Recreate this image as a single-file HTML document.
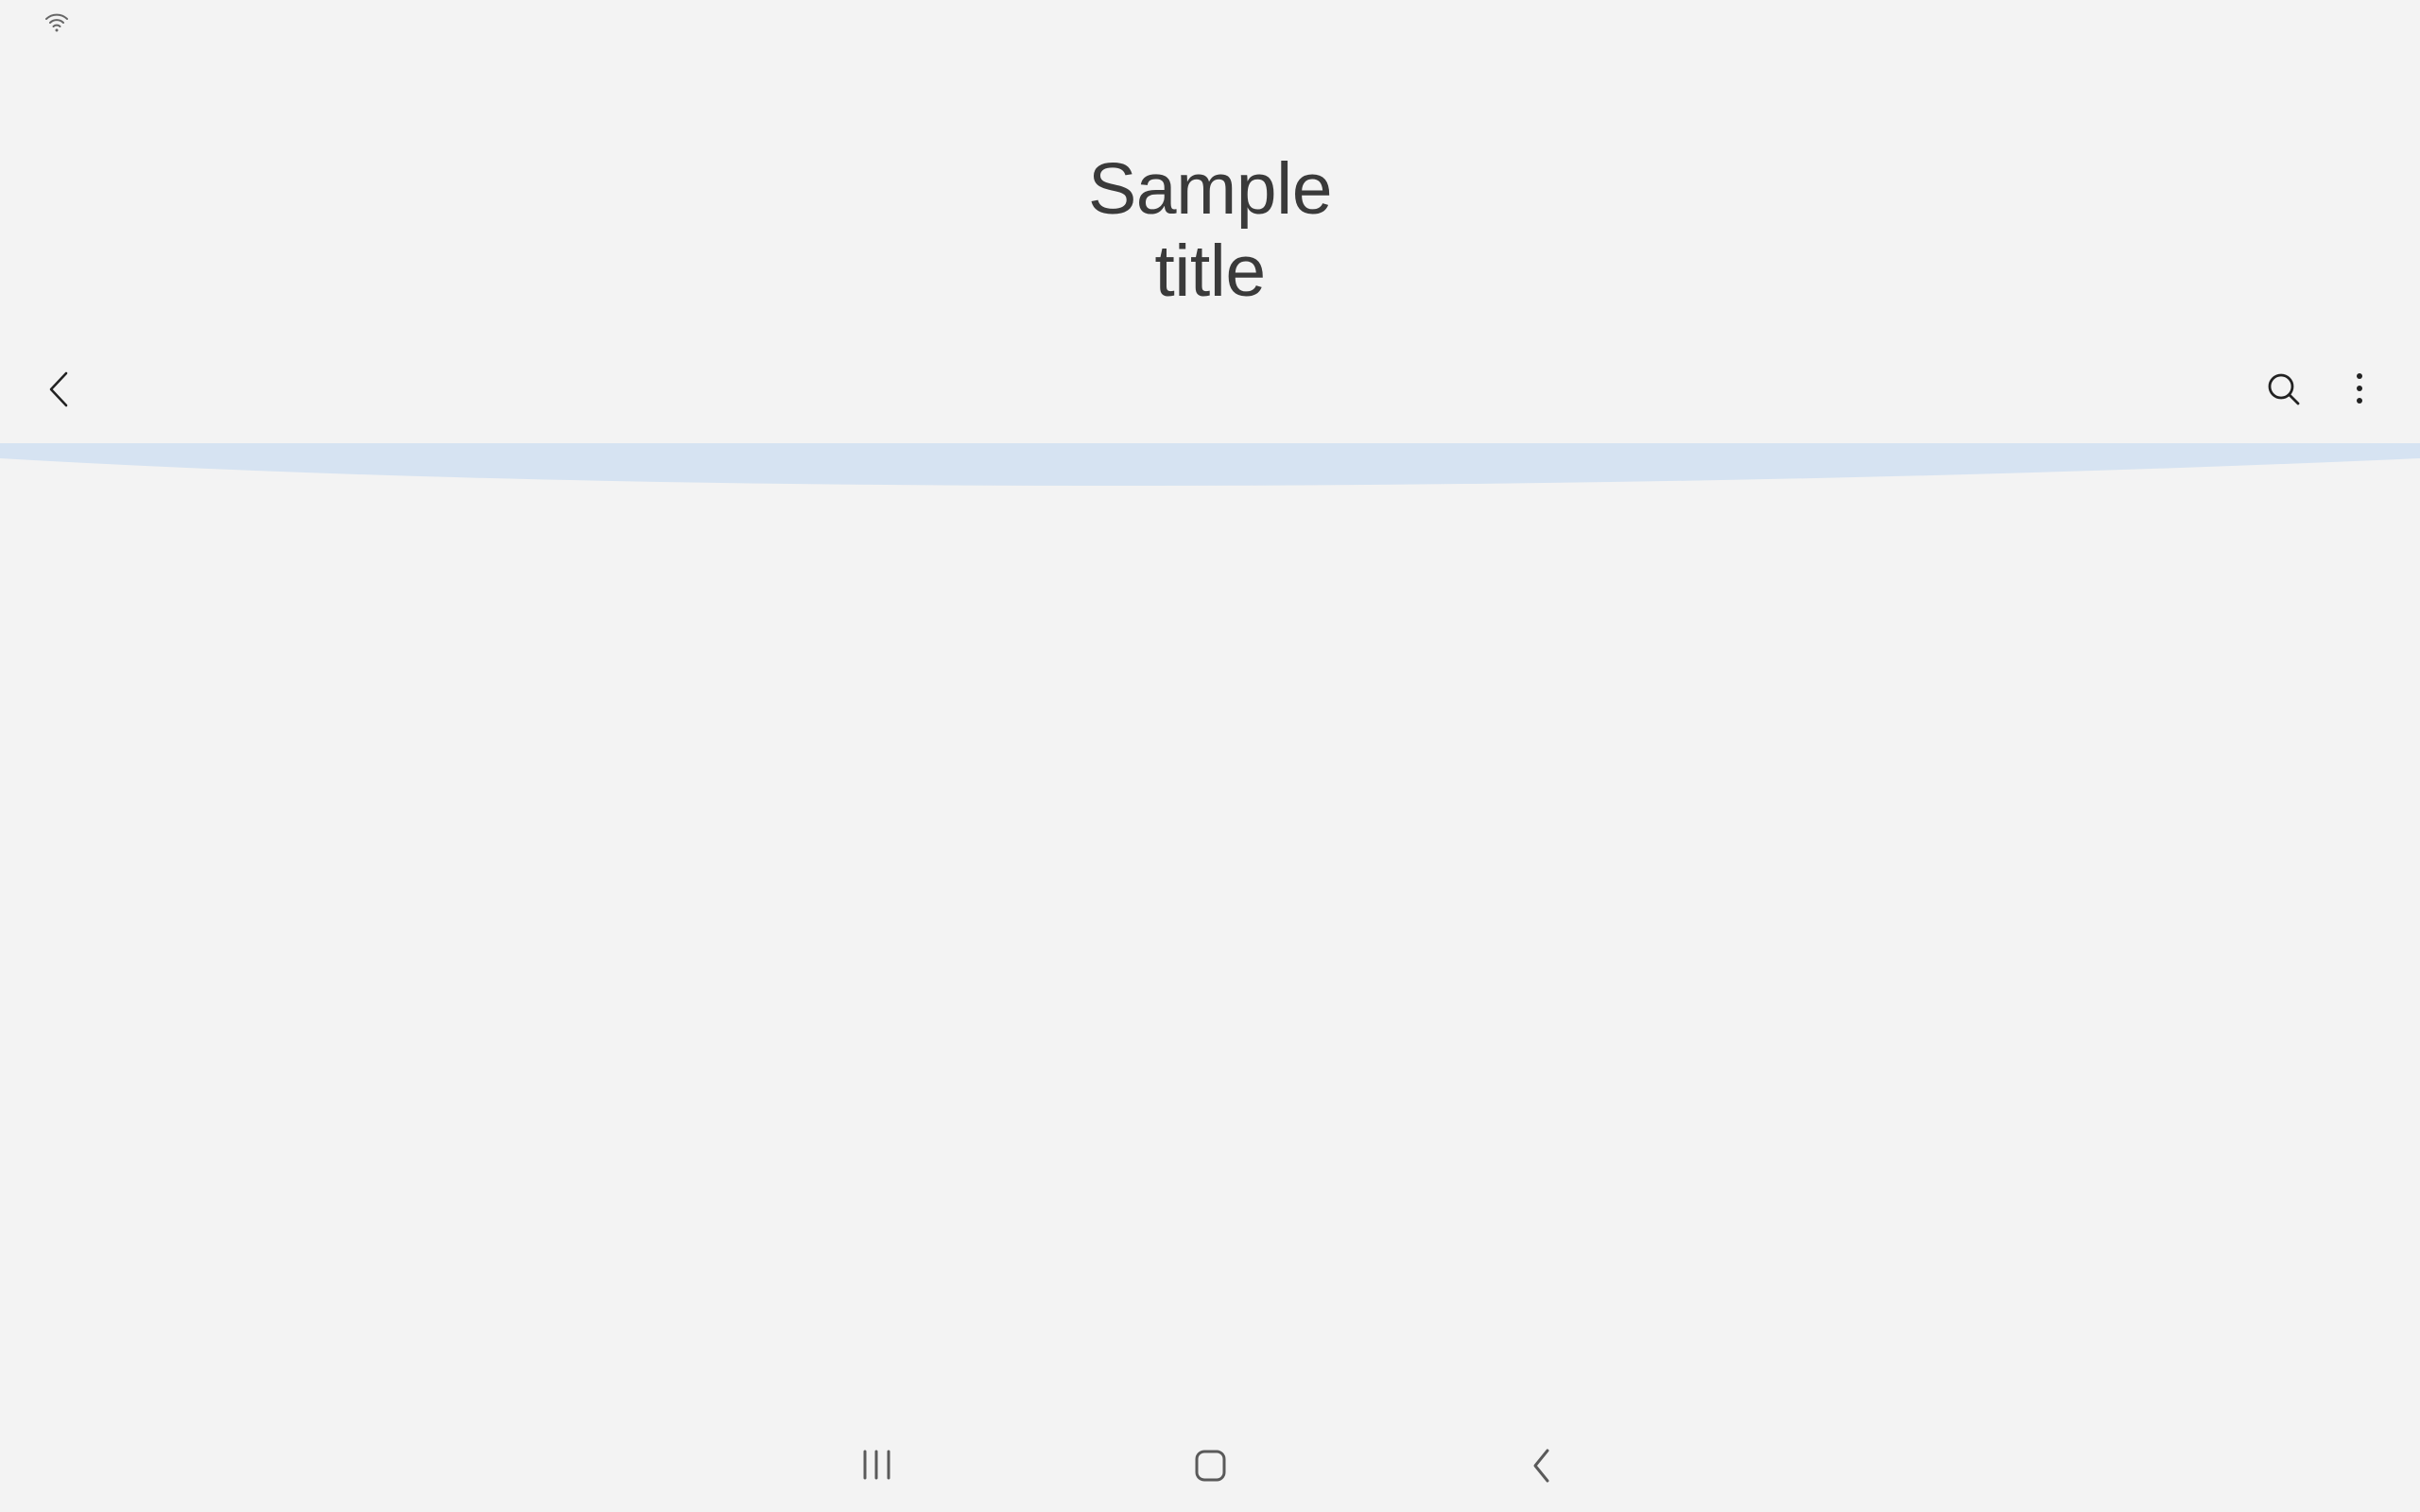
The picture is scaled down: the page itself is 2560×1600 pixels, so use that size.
<!DOCTYPE html>
<html><head><meta charset="utf-8"><style>
html,body{margin:0;padding:0;width:2560px;height:1600px;background:#f3f3f3;overflow:hidden;position:relative;font-family:"Liberation Sans",sans-serif}
.t{position:absolute;left:0;width:2560px;text-align:center;color:#3a3a3a;font-size:77px;font-weight:300;line-height:87px;top:157px;letter-spacing:-0.5px}
svg{position:absolute}
</style></head><body>
<svg style="left:46px;top:12px" width="28" height="24" viewBox="0 0 28 24" fill="none" stroke="#666" stroke-width="2" stroke-linecap="round">
<path d="M3 8a16 16 0 0 1 22 0"/><path d="M7 12a10 10 0 0 1 14 0"/><path d="M10.5 16a5 5 0 0 1 7 0"/><circle cx="14" cy="20" r="1.5" fill="#666" stroke="none"/>
</svg>
<div class="t">Sample<br>title</div>
<svg style="left:48px;top:392px" width="30" height="40" viewBox="0 0 30 40" fill="none" stroke="#222" stroke-width="2.6" stroke-linecap="round" stroke-linejoin="round"><path d="M22 3L6 20l16 17"/></svg>
<svg style="left:2396px;top:392px" width="40" height="40" viewBox="0 0 40 40" fill="none" stroke="#222" stroke-width="2.8" stroke-linecap="round"><circle cx="17" cy="17" r="12"/><path d="M26 26l9 9"/></svg>
<svg style="left:2484px;top:392px" width="24" height="40" viewBox="0 0 24 40" fill="#222"><circle cx="12" cy="6" r="3"/><circle cx="12" cy="19" r="3"/><circle cx="12" cy="32" r="3"/></svg>
<svg style="left:0;top:466px" width="2560" height="52" viewBox="0 0 2560 52"><path d="M0 3H2560V19Q1900 48 1180 48Q500 48 0 19Z" fill="#d6e3f2"/></svg>
<svg style="left:900px;top:1530px" width="760" height="42" viewBox="0 0 760 42" fill="none" stroke="#5a5a5a" stroke-width="3" stroke-linecap="round" stroke-linejoin="round">
<path d="M15 6v28M27 6v28M40 6v28"/>
<rect x="366" y="6" width="29" height="30" rx="8"/>
<path d="M737 5l-13 16 13 16"/>
</svg>
</body></html>
